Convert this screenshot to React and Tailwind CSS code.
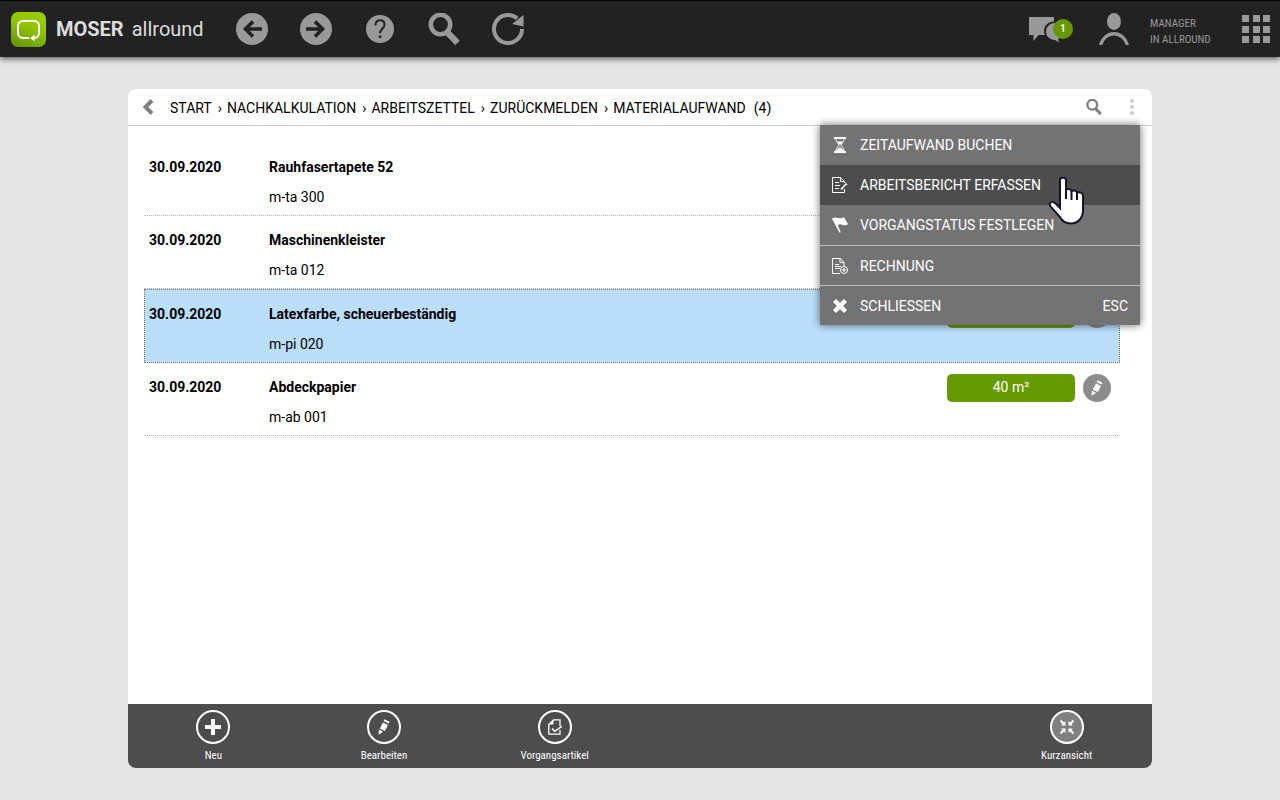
// src/App.jsx
import React, { useState } from "react";

const crumbs = ["START", "NACHKALKULATION", "ARBEITSZETTEL", "ZURÜCKMELDEN", "MATERIALAUFWAND"];

const materials = [
  { date: "30.09.2020", name: "Rauhfasertapete 52", code: "m-ta 300", amount: "12 Rol" },
  { date: "30.09.2020", name: "Maschinenkleister", code: "m-ta 012", amount: "2 kg" },
  { date: "30.09.2020", name: "Latexfarbe, scheuerbeständig", code: "m-pi 020", amount: "15 l" },
  { date: "30.09.2020", name: "Abdeckpapier", code: "m-ab 001", amount: "40 m²" },
];

/* ---------- Icons ---------- */

function Logo() {
  return (
    <svg width="35" height="35" viewBox="0 0 35 35" aria-hidden="true">
      <defs>
        <linearGradient id="logo-bg" x1="0.2" y1="1" x2="0.6" y2="0">
          <stop offset="0" stopColor="#669500" />
          <stop offset="0.6" stopColor="#8fc400" />
          <stop offset="1" stopColor="#99cc00" />
        </linearGradient>
      </defs>
      <rect width="35" height="35" rx="7" fill="url(#logo-bg)" />
      <path
        d="M18 26h-6a5 5 0 0 1-5-5v-7a5 5 0 0 1 5-5h11a5 5 0 0 1 5 5v7a5 5 0 0 1-5 5h-1"
        fill="none"
        stroke="#fff"
        strokeWidth="2"
      />
      <path d="M19 26l4.500-3.500v7z" fill="#fff" />
    </svg>
  );
}

function ArrowCircle({ flip }) {
  return (
    <svg width="32" height="32" viewBox="0 0 32 32" className={flip ? "-scale-x-100" : ""}>
      <circle cx="16" cy="16" r="16" fill="#999" />
      <path d="M26 16H9M17 8.500L9.500 16l7.500 7.500" fill="none" stroke="#222" strokeWidth="3.600" />
    </svg>
  );
}

function HelpIcon() {
  return (
    <svg width="32" height="32" viewBox="0 0 32 32">
      <circle cx="16" cy="16" r="14" fill="#999" />
      <path
        d="M11.500 12.500c0-3.200 1.700-5.200 4.500-5.200s4.500 1.800 4.500 4.400c0 4-4.500 4.300-4.500 8.600"
        fill="none"
        stroke="#222"
        strokeWidth="2"
      />
      <rect x="14.800" y="22.500" width="2.500" height="2.500" fill="#222" />
    </svg>
  );
}

function SearchIcon({ size }) {
  return (
    <svg width={size} height={size} viewBox="0 0 32 32" fill="none" stroke="currentColor">
      <circle cx="12.500" cy="11.500" r="9.700" strokeWidth="4.600" />
      <path d="M18.500 18.500L29.500 30" strokeWidth="6.200" />
    </svg>
  );
}

function ReloadIcon() {
  return (
    <svg width="32" height="32" viewBox="0 0 32 32">
      <path d="M30 16a14 14 0 1 1-4.800-10.500" fill="none" stroke="#999" strokeWidth="4" />
      <path d="M31.500 2v11.500l-11.500-2.500z" fill="#999" />
    </svg>
  );
}

function ChatIcon() {
  return (
    <svg width="32" height="28" viewBox="0 0 32 28" fill="#999">
      <path d="M0 2h25v4.500c-5.500 0-10 4-10 9.500 0 1.500.2 2.700.7 4H9.500L4.500 26V20H0z" />
      <path d="M26 8c-5 0-9 3.700-9 8.800 0 4.700 4 8.200 9 8.200l4 2.500-1-3.300 3-2.200V9z" />
    </svg>
  );
}

function UserIcon() {
  return (
    <svg width="32" height="32" viewBox="0 0 32 32">
      <ellipse cx="16" cy="8.500" rx="7" ry="8.500" fill="#999" />
      <path d="M2.500 32c2-7 7.500-11.300 13.500-11.300S27.500 25 29.500 32" fill="none" stroke="#999" strokeWidth="3.400" />
    </svg>
  );
}

function PencilIcon() {
  return (
    <svg width="16" height="16" viewBox="0 0 16 16" fill="#fff">
      <path d="M8.500.2l5 2.600-.8 1.700-5-2.600z" />
      <path d="M7 3.400l5 2.600-3.200 6-5-2.600z" />
      <path d="M3 10.500l4 2.200-4.500 3.100z" />
    </svg>
  );
}

function HourglassIcon() {
  return (
    <svg width="16" height="16" viewBox="0 0 16 16" fill="none" stroke="#fff">
      <path d="M2 1h12M2 15h12" strokeWidth="2" />
      <path d="M4 2c0 3.500 3 4.500 3 6s-3 2.500-3 6M12 2c0 3.500-3 4.500-3 6s3 2.500 3 6" />
      <path d="M5 4.500h6L8.500 7.500h-1zM4.500 14c0-2 3-3 3.500-4 .5 1 3.500 2 3.500 4z" fill="#fff" stroke="none" />
    </svg>
  );
}

function ReportIcon() {
  return (
    <svg width="16" height="16" viewBox="0 0 16 16" fill="none" stroke="#fff">
      <path d="M12.500 12v3.500h-12V.5h8l4 4V6M8.500.5v4h4" />
      <path d="M3 5.500h4M3 8.500h5M3 11.500h4" />
      <path d="M9 12.500l5-5.500" strokeWidth="1.600" />
      <path d="M13 5.500l2.500 2.500" />
    </svg>
  );
}

function FlagIcon() {
  return (
    <svg width="16" height="16" viewBox="0 0 16 16" fill="#fff">
      <path d="M0 1.800c2-1.800 4-1.600 6.300-.9 2.200.7 3.700.6 5.700-.6l4 7c-2 1.400-4 1.200-5.500.5-2-.9-3.500-.7-4.700.4l3 7-1.300.6z" />
    </svg>
  );
}

function InvoiceIcon() {
  return (
    <svg width="16" height="16" viewBox="0 0 16 16" fill="none" stroke="#fff">
      <path d="M8 15.500H.5V.5h8l3.500 4V8M8 .5v4h4" />
      <path d="M3 6.500h4M3 8.500h6M3 10.500h5" />
      <circle cx="12" cy="12" r="3.500" />
      <path d="M10 12h4M12 10v4" />
    </svg>
  );
}

function CloseIcon() {
  return (
    <svg width="16" height="16" viewBox="0 0 16 16" fill="none" stroke="#fff">
      <path d="M2.500 2.500l11 11M13.500 2.500l-11 11" strokeWidth="4.400" />
    </svg>
  );
}

function PlusIcon() {
  return (
    <svg width="16" height="16" viewBox="0 0 16 16" stroke="#fff">
      <path d="M8 0v16M0 8h16" strokeWidth="4" />
    </svg>
  );
}

function ArticleIcon() {
  return (
    <svg width="16" height="16" viewBox="0 0 16 16" fill="none" stroke="#fff">
      <path d="M13 11v4.200H1.800V5.500L6.500.8H13V7" strokeWidth="1.300" />
      <path d="M6 1.500V5H2.500z" fill="#fff" />
      <path d="M5 9.500l2.800 2.800 7-5" strokeWidth="1.500" />
    </svg>
  );
}

function CollapseIcon() {
  return (
    <svg width="16" height="16" viewBox="0 0 16 16" fill="none" stroke="#fff">
      <path d="M1.500 1.500l4 4M14.500 1.500l-4 4M1.500 14.500l4-4M14.500 14.500l-4-4" strokeWidth="2" />
      <path d="M6.500 2v4.500H2zM9.500 2v4.500H14zM6.500 14V9.500H2zM9.500 14V9.500H14z" fill="#fff" stroke="none" />
    </svg>
  );
}

function HandCursor() {
  return (
    <svg width="38" height="48" viewBox="0 0 38 48" aria-hidden="true">
      <path
        d="M12 3c0-3 6-3 6 0v9.500c3-1 5 0 5.500 1.500 3-1 5 0 5.500 1.500 3-.5 6 .5 6 3V33c0 8-5 13.500-12 13.500-6 0-9-2.500-11-6.500L2.500 29.500C0 25 4.500 24 7 26l5 5z"
        fill="#fff"
        stroke="#14142a"
        strokeWidth="2"
      />
      <path d="M18 12v10M23.500 14v9M29 15.500V23" stroke="#14142a" strokeWidth="2" />
    </svg>
  );
}

/* ---------- Layout ---------- */

const menuItems = [
  { label: "ZEITAUFWAND BUCHEN", icon: HourglassIcon },
  { label: "ARBEITSBERICHT ERFASSEN", icon: ReportIcon, active: true },
  { label: "VORGANGSTATUS FESTLEGEN", icon: FlagIcon },
  { label: "RECHNUNG", icon: InvoiceIcon, divider: true },
  { label: "SCHLIESSEN", icon: CloseIcon, divider: true, hint: "ESC" },
];

const actions = [
  { label: "Neu", icon: PlusIcon, column: "col-start-1" },
  { label: "Bearbeiten", icon: PencilIcon, column: "col-start-2" },
  { label: "Vorgangsartikel", icon: ArticleIcon, column: "col-start-3" },
  { label: "Kurzansicht", icon: CollapseIcon, column: "col-start-6", filled: true },
];

function Topbar() {
  return (
    <header className="z-10 flex h-[57px] shrink-0 items-center border-t border-black bg-[#222] pr-[10px] pl-[11px] shadow-[0_2px_6px_rgba(0,0,0,0.6)]">
      <Logo />
      <h1 className="ml-[10px] flex w-[180px] gap-2 text-[20px] leading-6 text-[#ddd]">
        <b className="font-bold">MOSER</b>
        <span>allround</span>
      </h1>
      <nav className="flex gap-8 text-[#999]">
        <button type="button" aria-label="Zurück"><ArrowCircle /></button>
        <button type="button" aria-label="Vor"><ArrowCircle flip /></button>
        <button type="button" aria-label="Hilfe"><HelpIcon /></button>
        <button type="button" aria-label="Suchen"><SearchIcon size={32} /></button>
        <button type="button" aria-label="Neu laden"><ReloadIcon /></button>
      </nav>
      <div className="ml-auto flex items-center">
        <button type="button" aria-label="Nachrichten" className="relative w-11">
          <ChatIcon />
          <span className="absolute top-1 right-0 flex h-5 w-5 items-center justify-center rounded-full bg-[#669900] text-[11px] font-medium text-white">
            1
          </span>
        </button>
        <button type="button" aria-label="Benutzer" className="ml-[25px]"><UserIcon /></button>
        <p className="ml-5 w-[92px] pt-[6px] font-['Roboto_Condensed',Roboto,sans-serif] text-[11px] leading-4 text-[#999]">
          MANAGER
          <br />
          IN ALLROUND
        </p>
        <button
          type="button"
          aria-label="Module"
          className="grid h-7 w-7 grid-cols-[repeat(3,7px)] content-between justify-between"
        >
          {Array.from({ length: 9 }, (_, i) => (
            <span key={i} className="h-[7px] w-[7px] bg-[#999]" />
          ))}
        </button>
      </div>
    </header>
  );
}

function ContextMenu({ onClose }) {
  return (
    <div
      role="menu"
      className="absolute top-9 right-3 z-10 w-80 bg-[#737373] text-white shadow-[0_0_8px_rgba(0,0,0,0.6)]"
    >
      {menuItems.map(({ label, icon: Icon, active, divider, hint }) => (
        <button
          key={label}
          type="button"
          role="menuitem"
          onClick={hint ? onClose : undefined}
          className={[
            "flex h-10 w-full items-center gap-3 px-3 text-left",
            active ? "bg-[#4d4d4d]" : "hover:bg-[#4d4d4d]",
            divider ? "border-t border-[#bfbfbf] pt-px" : "",
          ].join(" ")}
        >
          <Icon />
          <span className="flex-1">{label}</span>
          {hint && <span>{hint}</span>}
        </button>
      ))}
      <div className="pointer-events-none absolute top-[52px] right-[54px]">
        <HandCursor />
      </div>
    </div>
  );
}

function MaterialRow({ item, selected, onSelect }) {
  return (
    <li
      onClick={onSelect}
      className={[
        "flex border-dotted px-1",
        selected
          ? "h-[74px] border border-[#777] bg-[#bbdefb]"
          : "h-[73px] border-x border-b border-x-transparent border-b-[#b3b3b3]",
      ].join(" ")}
    >
      <b className="w-[120px] pt-4 leading-4 font-bold">{item.date}</b>
      <div className="flex-1 pt-4 leading-4">
        <b className="block font-bold">{item.name}</b>
        <span className="mt-[14px] block">{item.code}</span>
      </div>
      <div className={`flex items-start gap-2 pr-1 ${selected ? "pt-[10px]" : "pt-[11px]"}`}>
        <span className="h-7 w-32 rounded-[5px] bg-[#669900] text-center leading-[27px] text-white">
          {item.amount}
        </span>
        <button
          type="button"
          aria-label={`${item.name} bearbeiten`}
          className="flex h-7 w-7 items-center justify-center rounded-full bg-[#8c8c8c]"
        >
          <PencilIcon />
        </button>
      </div>
    </li>
  );
}

export default function App() {
  const [menuOpen, setMenuOpen] = useState(true);
  const [selected, setSelected] = useState(2);

  return (
    <div className="flex h-screen flex-col bg-[#e5e5e5] font-[Roboto,sans-serif] text-[14px] text-black">
      <Topbar />

      <main className="flex min-h-0 flex-1 px-[10%] py-8">
        <section className="relative flex flex-1 flex-col rounded-lg bg-white">
          {/* Breadcrumb */}
          <div className="flex h-[37px] shrink-0 items-center border-b border-[#ccc] pr-4 pl-[14px]">
            <button type="button" aria-label="Zurück" className="mr-[15px]">
              <svg width="13" height="16" viewBox="0 0 13 16" fill="none" stroke="#808080">
                <path d="M10 1.500L3.500 8l6.500 6.500" strokeWidth="4" />
              </svg>
            </button>
            <nav className="flex flex-1 pt-[3px]">
              {crumbs.map((crumb, i) => (
                <React.Fragment key={crumb}>
                  {i > 0 && <span className="pr-[5px] pl-[6px]">›</span>}
                  <a href="#">{crumb}</a>
                </React.Fragment>
              ))}
              <span className="ml-2">(4)</span>
            </nav>
            <button type="button" aria-label="Suchen" className="mr-[26px] text-[#808080]">
              <SearchIcon size={16} />
            </button>
            <button
              type="button"
              aria-label="Menü"
              aria-expanded={menuOpen}
              onClick={() => setMenuOpen((v) => !v)}
              className="flex w-2 flex-col items-center gap-[2px]"
            >
              <span className="h-1 w-1 rounded-full bg-[#ccc]" />
              <span className="h-1 w-1 rounded-full bg-[#ccc]" />
              <span className="h-1 w-1 rounded-full bg-[#ccc]" />
            </button>
          </div>

          {/* Material list */}
          <ul className="min-h-0 flex-1 overflow-hidden pt-[17px] pr-8 pl-4">
            {materials.map((item, i) => (
              <MaterialRow
                key={item.code}
                item={item}
                selected={selected === i}
                onSelect={() => setSelected(i)}
              />
            ))}
          </ul>

          {/* Actions */}
          <footer className="grid h-16 shrink-0 grid-cols-6 rounded-b-lg bg-[#4d4d4d] text-white">
            {actions.map(({ label, icon: Icon, column, filled }) => (
              <button
                key={label}
                type="button"
                className={`${column} flex flex-col items-center pt-[6px]`}
              >
                <span
                  className={`flex h-[34px] w-[34px] items-center justify-center rounded-full border-2 border-white ${
                    filled ? "bg-[#808080]" : ""
                  }`}
                >
                  <Icon />
                </span>
                <span className="mt-1 font-['Roboto_Condensed',Roboto,sans-serif] text-[11px] leading-4">
                  {label}
                </span>
              </button>
            ))}
          </footer>

          {menuOpen && <ContextMenu onClose={() => setMenuOpen(false)} />}
        </section>
      </main>
    </div>
  );
}
